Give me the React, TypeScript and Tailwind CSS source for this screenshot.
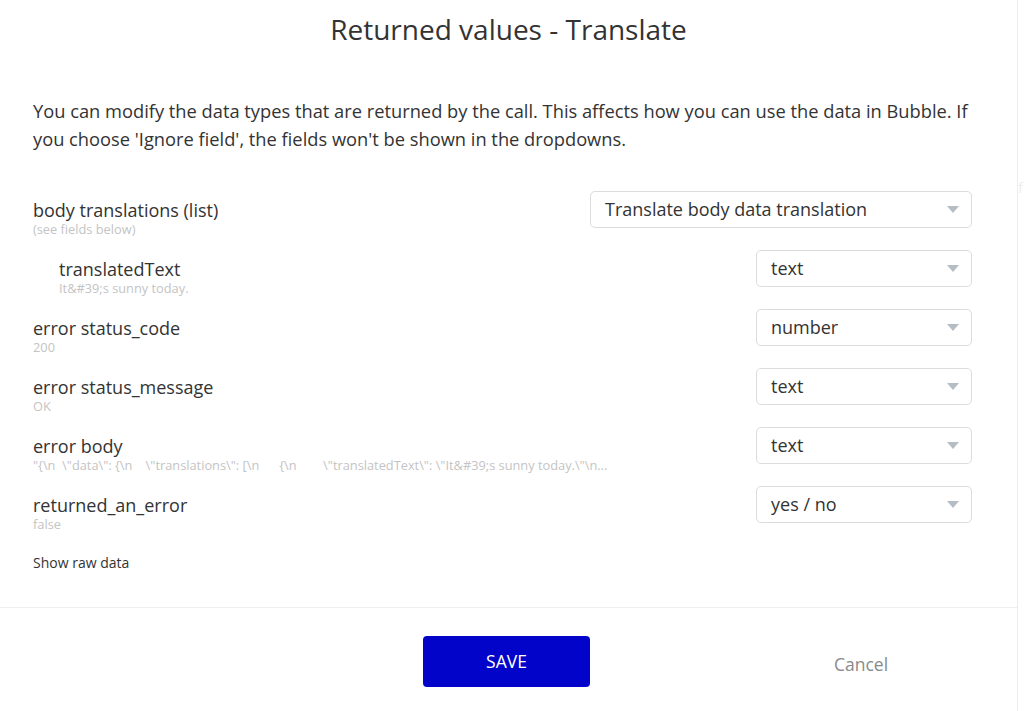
const rows = [
  { label: 'body translations (list)', sub: '(see fields below)', value: 'Translate body data translation', wide: true },
  { label: 'translatedText', sub: 'It&#39;s sunny today.', value: 'text', indent: true },
  { label: 'error status_code', sub: '200', value: 'number' },
  { label: 'error status_message', sub: 'OK', value: 'text' },
  {
    label: 'error body',
    sub: '"{\\n  \\"data\\": {\\n    \\"translations\\": [\\n      {\\n        \\"translatedText\\": \\"It&#39;s sunny today.\\"\\n...',
    value: 'text',
  },
  { label: 'returned_an_error', sub: 'false', value: 'yes / no' },
]

function Dropdown({ value, wide }: { value: string; wide?: boolean }) {
  return (
    <div
      className={`flex h-[37px] shrink-0 items-center justify-between rounded-[5px] border border-[#dcdcdc] bg-white pl-[14px] pr-[12px] ${
        wide ? 'w-[382px]' : 'w-[216px]'
      }`}
    >
      <span className="text-[18px] text-[#333]">{value}</span>
      <svg width="12" height="7" viewBox="0 0 12 7">
        <path d="M0 0h12L6 7z" fill="#b4bcc4" />
      </svg>
    </div>
  )
}

export default function App() {
  return (
    <div
      className="flex h-[711px] w-[1024px] overflow-hidden bg-white"
      style={{ fontFamily: '"Open Sans", sans-serif' }}
    >
      <div className="flex w-[1018px] shrink-0 flex-col border-r border-[#eeeeee] bg-white">
        <h1 className="mt-[9px] text-center text-[28px] leading-[40px] text-[#333]">
          Returned values - Translate
        </h1>

        <p className="mt-[48px] px-[33px] text-[18.3px] leading-[28px] text-[#333]">
          You can modify the data types that are returned by the call. This affects how you can
          use the data in Bubble. If
          <br />
          you choose 'Ignore field', the fields won't be shown in the dropdowns.
        </p>

        <div className="mt-[38px] flex flex-col pl-[33px] pr-[45px]">
          {rows.map((row) => (
            <div key={row.label} className="flex h-[59px] items-start justify-between">
              <div className={`flex flex-col pt-[8px] ${row.indent ? 'pl-[26px]' : ''}`}>
                <div className="text-[18px] leading-[23px] text-[#333]">{row.label}</div>
                <div className="whitespace-pre text-[12.8px] leading-[15px] text-[#c4c4c4]">
                  {row.sub}
                </div>
              </div>
              <Dropdown value={row.value} wide={row.wide} />
            </div>
          ))}
        </div>

        <div className="mt-[8px] px-[33px] text-[14px] leading-[20px] text-[#333]">
          Show raw data
        </div>

        <div className="mt-[34px] border-t border-[#eeeeee]">
          <div className="flex items-center pt-[28px]">
            <button className="ml-[423px] flex h-[51px] w-[167px] items-center justify-center rounded-[4px] bg-[#0205c9] text-[17.5px] text-white">
              SAVE
            </button>
            <button className="ml-[244px] pt-[5px] text-[17.5px] text-[#8a8a8a]">Cancel</button>
          </div>
        </div>
      </div>
      <div className="relative flex-1">
        <span className="absolute left-[0px] top-[176px] text-[15px] text-[#eeeeee]">f</span>
      </div>
    </div>
  )
}
